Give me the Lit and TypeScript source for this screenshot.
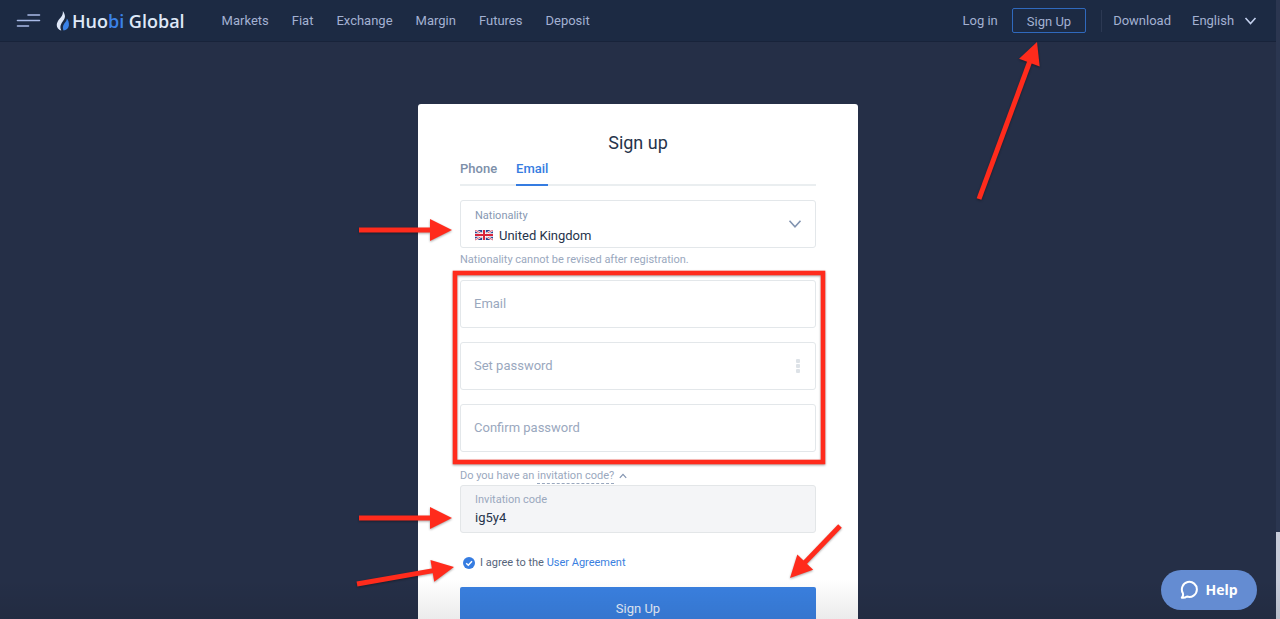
import { LitElement, html, css, svg } from "lit";
import { customElement, property, state } from "lit/decorators.js";

const arrow = (x1: number, y1: number, x2: number, y2: number) => {
  const length = Math.hypot(x2 - x1, y2 - y1);
  const ux = (x2 - x1) / length;
  const uy = (y2 - y1) / length;
  const head = 22;
  const half = 11;
  const bx = x2 - ux * head;
  const by = y2 - uy * head;
  return svg`
    <line x1=${x1} y1=${y1} x2=${bx + ux} y2=${by + uy} stroke="#ff2b1c" stroke-width="5"></line>
    <polygon fill="#ff2b1c" points="${x2},${y2} ${bx - uy * half},${by + ux * half} ${bx + uy * half},${by - ux * half}"></polygon>`;
};

@customElement("site-header")
export class SiteHeader extends LitElement {
  static styles = css`
    :host {
      display: block;
      position: relative;
      z-index: 2;
      background: #1c2a43;
      border-bottom: 1px solid #18233a;
      font: 13px/20px Roboto, "Liberation Sans", sans-serif;
      color: #a3b1d2;
    }
    .bar {
      display: flex;
      align-items: center;
      height: 41px;
      padding: 0 18px 0 16px;
    }
    a {
      color: inherit;
      text-decoration: none;
    }
    button, select {
      font: inherit;
      color: inherit;
      background: none;
      border: 0;
      padding: 0;
      margin: 0;
    }
    .menu {
      display: flex;
      margin-right: 15px;
    }
    .logo {
      display: flex;
      align-items: center;
      gap: 2px;
      margin-right: 37px;
      font: 600 18px/24px "Open Sans", sans-serif;
      color: #dfe8f8;
    }
    .logo .blue {
      color: #3a82e8;
    }
    nav {
      display: flex;
      gap: 23px;
      flex: 1;
    }
    .account {
      display: flex;
      align-items: center;
    }
    .signup {
      border: 1px solid #2f69bd;
      border-radius: 2px;
      padding: 3px 14px 0;
      margin: 0 15px 0 14px;
    }
    .rule {
      width: 1px;
      height: 22px;
      margin-right: 11px;
      background: #2c3953;
    }
    .language {
      display: flex;
      align-items: center;
      gap: 8px;
      margin-left: 21px;
    }
    .language select {
      appearance: none;
    }
    .marks {
      position: absolute;
      right: 0;
      top: 0;
      pointer-events: none;
      filter: drop-shadow(0 1px 1px rgba(0, 0, 0, 0.35));
    }
  `;

  render() {
    return html`
      <div class="bar">
        <button class="menu" aria-label="Menu">
          <svg width="25" height="15" viewBox="0 0 25 15" stroke="#a9bbe8" stroke-width="1.6" stroke-linecap="round">
            <path d="M12 2H23.500M1.500 7.500H23.500M1.500 13H12.500"></path>
          </svg>
        </button>
        <a class="logo" href="#">
          <svg width="14" height="22" viewBox="0 0 14 22">
            <path fill="#dfe8f8" d="M6.800 1C7.300 4.500 5.800 6.200 3.600 8.800C.8 12 -.2 15.500 1.800 18.300C2.700 19.500 3.900 20.200 5.300 20.500C3.900 18 4.100 15.400 5.800 12.800C7.800 10 9.200 8.500 8.900 5.800C8.700 3.900 7.900 2.200 6.800 1Z"></path>
            <path fill="#3a82e8" d="M10.900 8.500C10.700 10.800 9.700 11.800 8.300 13.600C6.700 15.800 6.500 18.200 7.500 20.600C10.300 20.200 12.500 18.200 12.900 15.400C13.200 12.800 12.300 10.200 10.900 8.500Z"></path>
          </svg>
          <span>Huo<span class="blue">bi</span> Global</span>
        </a>
        <nav>
          ${["Markets", "Fiat", "Exchange", "Margin", "Futures", "Deposit"].map(
            (item) => html`<a href="#">${item}</a>`
          )}
        </nav>
        <div class="account">
          <a href="#">Log in</a>
          <button class="signup">Sign Up</button>
          <span class="rule"></span>
          <a href="#">Download</a>
          <label class="language">
            <select aria-label="Language"><option>English</option></select>
            <svg width="15" height="10" viewBox="0 0 15 10" fill="none" stroke="#c3d0ee" stroke-width="1.6">
              <path d="M2.500 2L7.500 7.500L12.500 2"></path>
            </svg>
          </label>
        </div>
      </div>
      <svg class="marks" width="320" height="210" viewBox="956 0 320 210" aria-hidden="true">
        ${arrow(979, 199, 1037, 42)}
      </svg>
    `;
  }
}

@customElement("text-field")
export class TextField extends LitElement {
  static styles = css`
    :host {
      display: block;
    }
    .box {
      display: flex;
      align-items: center;
      box-sizing: border-box;
      height: 48px;
      border: 1px solid #e3e7ea;
      border-radius: 3px;
      padding: 0 14px 0 13px;
      background: #fff;
    }
    input {
      flex: 1;
      min-width: 0;
      border: 0;
      outline: 0;
      padding: 0;
      background: none;
      font: 13px/20px Roboto, "Liberation Sans", sans-serif;
      color: #26344b;
    }
    input::placeholder {
      color: #9aa8be;
      opacity: 1;
    }
  `;

  @property() label = "";
  @property() type = "text";
  @property({ type: Boolean }) strength = false;

  render() {
    return html`
      <div class="box">
        <input type=${this.type} placeholder=${this.label} aria-label=${this.label} />
        ${this.strength
          ? html`<svg width="6" height="16" viewBox="0 0 6 16" fill="#dde2e7">
              <rect x="1" y="1" width="4" height="4" rx="1"></rect>
              <rect x="1" y="6" width="4" height="4" rx="1"></rect>
              <rect x="1" y="11" width="4" height="4" rx="1"></rect>
            </svg>`
          : null}
      </div>
    `;
  }
}

@customElement("signup-card")
export class SignupCard extends LitElement {
  static styles = css`
    :host {
      display: block;
      position: relative;
      box-sizing: border-box;
      width: 440px;
      max-width: 100%;
      padding: 28px 42px 40px;
      border-radius: 3px;
      background: #fff;
      font: 11px/20px Roboto, "Liberation Sans", sans-serif;
      color: #26344b;
    }
    h1 {
      margin: 0;
      font-size: 18px;
      font-weight: 400;
      line-height: 22px;
      text-align: center;
    }
    button, select, input {
      font: inherit;
      color: inherit;
      background: none;
      border: 0;
      outline: 0;
      padding: 0;
      margin: 0;
    }
    a {
      color: #3a7fe0;
      text-decoration: none;
    }
    .tabs {
      display: flex;
      gap: 19px;
      margin-bottom: 14px;
      box-shadow: inset 0 -2px #eaeef0;
    }
    .tab {
      border-bottom: 2px solid transparent;
      font-size: 13px;
      font-weight: 500;
      line-height: 30px;
      color: #7d8fa9;
    }
    .tab.active {
      color: #357ce1;
      border-color: #357ce1;
    }
    .box {
      display: flex;
      align-items: center;
      box-sizing: border-box;
      height: 48px;
      border: 1px solid #e3e7ea;
      border-radius: 3px;
      padding: 0 13px 0 14px;
    }
    .stack {
      display: flex;
      flex-direction: column;
      flex: 1;
      min-width: 0;
      padding-top: 2px;
    }
    .spaced {
      gap: 2px;
      padding-top: 6px;
    }
    .caption {
      line-height: 16px;
      color: #8798b2;
    }
    .value {
      display: flex;
      align-items: center;
      gap: 6px;
      font-size: 13px;
      line-height: 20px;
    }
    .value select {
      flex: 1;
      appearance: none;
    }
    .filled {
      background: #f4f5f7;
      border-color: #e3e6e8;
    }
    .filled .caption, .note, .invite {
      color: #9aa8be;
    }
    .note {
      margin: 0 0 8px;
      line-height: 24px;
    }
    .fields {
      display: flex;
      flex-direction: column;
      gap: 14px;
      margin-bottom: 15px;
    }
    .invite {
      display: flex;
      align-items: center;
      gap: 3px;
      line-height: 18px;
    }
    .invite button {
      display: flex;
      align-items: center;
      gap: 5px;
    }
    .dashed {
      line-height: 14px;
      border-bottom: 1px dashed #9aa8be;
    }
    .agree {
      display: flex;
      align-items: center;
      gap: 5px;
      margin: 20px 0 14px 3px;
      color: #56657b;
    }
    .agree input {
      appearance: none;
      width: 12px;
      height: 12px;
      border-radius: 50%;
      background: #b9c3d2;
    }
    .agree input:checked {
      background: #357ce1 url("data:image/svg+xml,%3Csvg xmlns='http://www.w3.org/2000/svg' viewBox='0 0 12 12'%3E%3Cpath d='M3.200 6.200L5.300 8.200L9 4.300' fill='none' stroke='white' stroke-width='1.500'/%3E%3C/svg%3E");
    }
    .submit {
      display: block;
      width: 100%;
      height: 44px;
      border-radius: 2px;
      background: #3a80e0;
      font-size: 13px;
      color: #e6effc;
    }
    .marks {
      position: absolute;
      left: -68px;
      top: 156px;
      pointer-events: none;
      filter: drop-shadow(0 1px 1px rgba(0, 0, 0, 0.35));
    }
  `;

  @state() private tab = "Email";

  render() {
    return html`
      <h1>Sign up</h1>
      <div class="tabs" role="tablist">
        ${["Phone", "Email"].map(
          (name) => html`<button
            class="tab ${this.tab === name ? "active" : ""}"
            role="tab"
            aria-selected=${this.tab === name}
            @click=${() => (this.tab = name)}
          >${name}</button>`
        )}
      </div>
      <div class="box">
        <div class="stack spaced">
          <label class="caption" for="country">Nationality</label>
          <div class="value">
            <svg width="18" height="12" viewBox="0 0 18 12">
              <rect width="18" height="10" fill="#2c4590"></rect>
              <path d="M0 0L18 10M18 0L0 10" stroke="#fff" stroke-width="2.200"></path>
              <path d="M0 0L18 10M18 0L0 10" stroke="#d8324a" stroke-width="0.800"></path>
              <path d="M9 0V10M0 5H18" stroke="#fff" stroke-width="3.600"></path>
              <path d="M9 0V10M0 5H18" stroke="#d8243c" stroke-width="2"></path>
            </svg>
            <select id="country"><option>United Kingdom</option></select>
          </div>
        </div>
        <svg width="14" height="10" viewBox="0 0 14 10" fill="none" stroke="#8294b0" stroke-width="1.600">
          <path d="M1.500 1.800L7 7.800L12.500 1.800"></path>
        </svg>
      </div>
      <p class="note">Nationality cannot be revised after registration.</p>
      <div class="fields">
        <text-field label="Email" type="email"></text-field>
        <text-field label="Set password" type="password" strength></text-field>
        <text-field label="Confirm password" type="password"></text-field>
      </div>
      <div class="invite">
        <span>Do you have an</span>
        <button>
          <span class="dashed">invitation code?</span>
          <svg width="8" height="6" viewBox="0 0 8 6" fill="none" stroke="#8294b0" stroke-width="1.200">
            <path d="M.8 4.800L4 1.300L7.200 4.800"></path>
          </svg>
        </button>
      </div>
      <div class="box filled">
        <div class="stack">
          <label class="caption" for="code">Invitation code</label>
          <div class="value"><input id="code" .value=${"ig5y4"} /></div>
        </div>
      </div>
      <div class="agree">
        <input id="agree" type="checkbox" checked />
        <label for="agree">I agree to the <a href="#">User Agreement</a></label>
      </div>
      <button class="submit">Sign Up</button>
      <svg class="marks" width="500" height="350" viewBox="350 260 500 350" overflow="visible" aria-hidden="true">
        <rect x="455" y="273" width="368" height="189" fill="none" stroke="#ff2b1c" stroke-width="4.600"></rect>
        ${arrow(359, 230, 452, 230)} ${arrow(359, 518, 452, 518)} ${arrow(357, 584, 454, 567)}
        ${arrow(840, 526, 790, 578)}
      </svg>
    `;
  }
}

@customElement("app-root")
export class AppRoot extends LitElement {
  static styles = css`
    :host {
      display: flex;
      position: relative;
      height: 100vh;
      overflow: hidden;
      background: #252f47;
    }
    .page {
      flex: 1;
      min-width: 0;
    }
    main {
      display: flex;
      justify-content: center;
      padding-top: 62px;
    }
    .track {
      display: flex;
      flex-direction: column;
      justify-content: flex-end;
      width: 4px;
      background: #2b3650;
    }
    .thumb {
      height: 14%;
      background: #c8ccda;
    }
    .shade {
      position: absolute;
      left: 0;
      right: 0;
      bottom: 0;
      height: 40px;
      background: linear-gradient(transparent, rgba(0, 0, 0, 0.08));
      pointer-events: none;
    }
    .help {
      position: absolute;
      right: 23px;
      bottom: 9px;
      display: flex;
      align-items: center;
      justify-content: center;
      gap: 6px;
      width: 96px;
      height: 40px;
      padding: 0;
      border: 0;
      border-radius: 20px;
      background: #648cd2;
      color: #fff;
      font: 700 14px/20px "Open Sans", sans-serif;
    }
  `;

  render() {
    return html`
      <div class="page">
        <site-header></site-header>
        <main><signup-card></signup-card></main>
      </div>
      <div class="track"><div class="thumb"></div></div>
      <div class="shade"></div>
      <button class="help">
        <svg width="19" height="20" viewBox="0 0 19 20" fill="none" stroke="#fff" stroke-width="2" stroke-linejoin="round">
          <path d="M2.800 13A7.500 7.500 0 1 1 7 16.500C5.500 17.600 3.500 18 1.800 17.700C2.900 16.500 3.400 14.700 2.800 13Z"></path>
        </svg>
        Help
      </button>
    `;
  }
}
